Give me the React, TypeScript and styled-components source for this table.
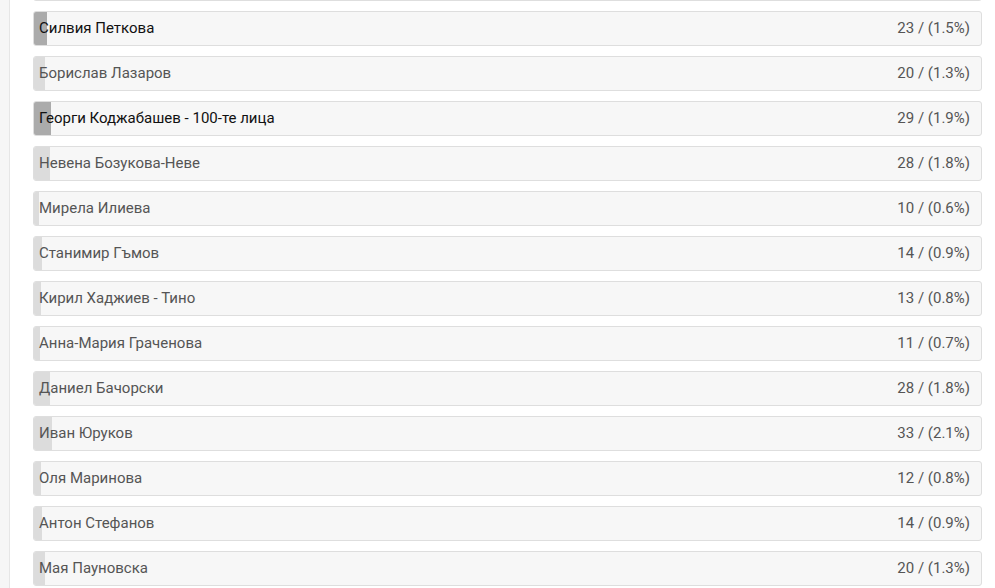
import styled, { createGlobalStyle } from 'styled-components';

type TCandidate = {
  name: string;
  votes: number;
  percent: number;
  selected?: boolean;
};

const candidates: TCandidate[] = [
  { name: '', votes: 0, percent: 0 },
  { name: 'Силвия Петкова', votes: 23, percent: 1.5, selected: true },
  { name: 'Борислав Лазаров', votes: 20, percent: 1.3 },
  { name: 'Георги Коджабашев - 100-те лица', votes: 29, percent: 1.9, selected: true },
  { name: 'Невена Бозукова-Неве', votes: 28, percent: 1.8 },
  { name: 'Мирела Илиева', votes: 10, percent: 0.6 },
  { name: 'Станимир Гъмов', votes: 14, percent: 0.9 },
  { name: 'Кирил Хаджиев - Тино', votes: 13, percent: 0.8 },
  { name: 'Анна-Мария Граченова', votes: 11, percent: 0.7 },
  { name: 'Даниел Бачорски', votes: 28, percent: 1.8 },
  { name: 'Иван Юруков', votes: 33, percent: 2.1 },
  { name: 'Оля Маринова', votes: 12, percent: 0.8 },
  { name: 'Антон Стефанов', votes: 14, percent: 0.9 },
  { name: 'Мая Пауновска', votes: 20, percent: 1.3 },
];

const GlobalStyle = createGlobalStyle`
  html, body {
    margin: 0;
    padding: 0;
    background: #fff;
    overflow: hidden;
  }
  * {
    box-sizing: border-box;
  }
`;

export default function App() {
  return (
    <>
      <GlobalStyle />
      <Wrapper>
        <SideStrip />
        <ResultsBlock>
          <ResultList>
            {candidates.map((c, i) => (
              <ResultRow key={i}>
                <Bar selected={!!c.selected} style={{ width: `${c.percent * 0.92}%` }} />
                <Name selected={!!c.selected}>{c.name}</Name>
                {c.name && (
                  <Count>
                    {c.votes} / ({c.percent.toFixed(1)}%)
                  </Count>
                )}
              </ResultRow>
            ))}
          </ResultList>
        </ResultsBlock>
      </Wrapper>
    </>
  );
}

const Wrapper = styled.div`
  display: flex;
  width: 100%;
  height: 588px;
  overflow: hidden;
  font-family: Roboto, 'Liberation Sans', sans-serif;
`;

const SideStrip = styled.div`
  flex: 0 0 10px;
  background-color: #f6f6f6;
  border-right: 1px solid #e6e6e6;
`;

const ResultsBlock = styled.div`
  flex: 1;
  padding: 0 13px 0 23px;
`;

const ResultList = styled.div`
  display: flex;
  flex-direction: column;
  gap: 10px;
  margin-top: -34px;
`;

const ResultRow = styled.div`
  position: relative;
  display: flex;
  align-items: center;
  justify-content: space-between;
  height: 35px;
  padding: 0 11px 2px 5px;
  background-color: #f7f7f7;
  border: 1px solid #dedede;
  border-radius: 3px;
  overflow: hidden;
`;

const Bar = styled.div<{ selected: boolean }>`
  position: absolute;
  left: 0;
  top: 0;
  bottom: 0;
  background-color: ${({ selected }) => (selected ? '#ababab' : '#dcdcdc')};
`;

const Name = styled.span<{ selected: boolean }>`
  position: relative;
  font-size: 15px;
  color: ${({ selected }) => (selected ? '#111' : '#555')};
`;

const Count = styled.span`
  position: relative;
  font-size: 15px;
  color: #555;
`;
